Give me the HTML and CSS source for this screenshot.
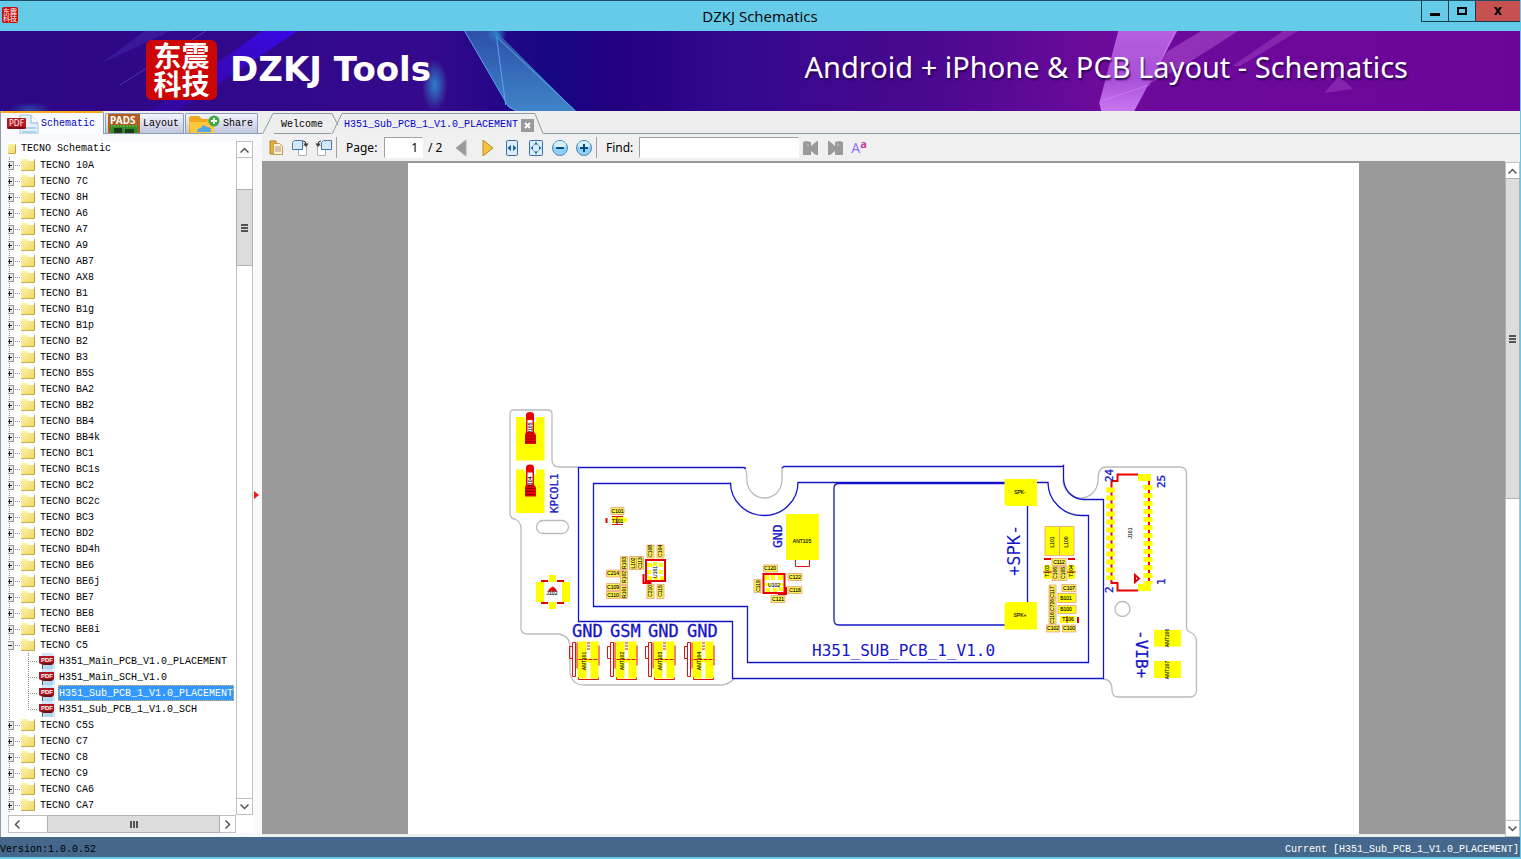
FILE: index.html
```html
<!DOCTYPE html>
<html lang="en">
<head>
<meta charset="utf-8">
<title>DZKJ Schematics</title>
<link rel="stylesheet" href="styles.css">
</head>
<body>
<div class="app">
<header class="titlebar">
  <span class="app-icon" aria-hidden="true">东震科技</span>
  <h1 class="window-title">DZKJ Schematics</h1>
  <div class="window-buttons">
    <button class="win-btn" aria-label="Minimize"><svg width="10" height="10"><path d="M0 7h10v3H0z"/></svg></button>
    <button class="win-btn" aria-label="Maximize"><svg width="10" height="10"><path d="M0 1h10v8H0zM2 3v4h6V3z" fill-rule="evenodd"/></svg></button>
    <button class="win-btn close" aria-label="Close"><svg width="10" height="10"><path d="M1 1h2.500L5 3.500 6.500 1H9L6.300 5 9 9H6.500L5 6.500 3.500 9H1l2.700-4z"/></svg></button>
  </div>
</header>

<section class="banner">
  <svg class="banner-art" viewBox="0 31 1521 80" preserveAspectRatio="none" aria-hidden="true">
    <defs>
      <linearGradient id="bg"><stop offset="0" stop-color="#2c0786"/><stop offset=".28" stop-color="#35098c"/><stop offset=".36" stop-color="#170682"/><stop offset=".41" stop-color="#240080"/><stop offset=".48" stop-color="#33088d"/><stop offset=".6" stop-color="#47088f"/><stop offset=".68" stop-color="#5e0998"/><stop offset=".72" stop-color="#6d0a9c"/><stop offset="1" stop-color="#6b0599"/></linearGradient>
      <linearGradient id="ray" x1="1" y1="0" x2="0" y2="1"><stop offset="0" stop-color="#3808e8"/><stop offset="1" stop-color="#3808b0" stop-opacity=".5"/></linearGradient>
      <linearGradient id="blue" x1="0" y1="0" x2="0" y2="1"><stop offset="0" stop-color="#2d50a8"/><stop offset="1" stop-color="#3f84c8"/></linearGradient>
      <linearGradient id="pink" x1="0" y1="0" x2="0" y2="1"><stop offset="0" stop-color="#b560dc"/><stop offset=".6" stop-color="#a850d8"/><stop offset="1" stop-color="#c878f0"/></linearGradient>
      <radialGradient id="glow"><stop offset="0" stop-color="#3080c8"/><stop offset="1" stop-color="#3080c8" stop-opacity="0"/></radialGradient>
    </defs>
    <path fill="url(#bg)" d="M0 31h1521v80H0z"/>
    <path fill="url(#ray)" d="M150 111 262 31h36L178 111z"/>
    <path d="M120 85 206 31" stroke="#6060e0" opacity=".5"/>
    <path d="M100 64 145 31h26z" fill="#5040c0" opacity=".3"/>
    <ellipse cx="435" cy="85" rx="13" ry="26" fill="url(#glow)"/>
    <ellipse cx="30" cy="110" rx="22" ry="8" fill="url(#glow)" opacity=".5"/>
    <path fill="url(#blue)" d="M465 31h31l80 80h-60l-7-4z"/>
    <path d="M465 31 509 107l8 4M496 31l10 74M497 37l79 74" fill="none" stroke="#5ea4ee"/>
    <ellipse cx="497" cy="34" rx="10" ry="9" fill="url(#glow)"/>
    <path fill="url(#pink)" d="M1119 31h59l-43 80h-33l-2-8z"/>
    <path d="M1102 101l48-16 26-54" fill="none" stroke="#e090ff" opacity=".5"/>
    <path fill="#b050d0" opacity=".55" d="M1202 31h37l-58 37-32 16 18-32z"/>
    <path fill="#b050d0" opacity=".4" d="M1284 31h15l-58 35h-8z"/>
    <path fill="#a040c0" opacity=".5" d="M1340 76l14 13-29 4z"/>
  </svg>
  <span class="logo" lang="zh">东震科技</span>
  <h2 class="brand">DZKJ Tools</h2>
  <p class="slogan">Android + iPhone &amp; PCB Layout - Schematics</p>
</section>

<main class="workspace">
<aside class="sidebar">
  <div class="side-tabs">
    <button class="side-tab active">
      <svg width="32" height="20"><path d="M13 1h11l7 8v11H13z" fill="#e4f1fb" stroke="#aac4dc"/><path d="M24 1v8h7" fill="#fff" stroke="#8fb0d0"/><path d="M15 14h14M15 18h14" stroke="#a8d4ee" stroke-width="2"/><rect y="4" width="19" height="11" rx="1" fill="#b81820"/><path d="M0 13h19l-2 2H2z" fill="#801018"/><text x="2" y="12" class="badge">PDF</text></svg>Schematic</button>
    <button class="side-tab">
      <svg width="32" height="20"><path d="M0 0h32v20H0z" fill="#b35c1c"/><path d="M2 11h28v9H2z" fill="#388a28"/><path d="M6 14h8v6H6zM17 15h9v5h-9z" fill="#173c18"/><path d="M3 12h26" stroke="#8bc34a" stroke-dasharray="2 1"/><text x="2" y="10" class="badge pads">PADS</text></svg>Layout</button>
    <button class="side-tab">
      <svg width="32" height="20"><path d="M1 4q0-2 2-2h8l3 3h10q2 0 2 2v13H1z" fill="#f0a81c"/><path d="M1 8h25v12H3z" fill="#ffc83c"/><path d="M9 18q0-4 4-4 2-5 6-1 5 0 4 5z" fill="#50a8e8"/><circle cx="26" cy="7" r="5.500" fill="#3eac48"/><path d="M26 4v6M23 7h6" stroke="#fff" stroke-width="2"/></svg>Share</button>
  </div>
  <div class="tree-frame">
    <div class="tree-row">
      <nav class="tree-view" aria-label="Schematics">
        <div class="root"><i class="folder cut"></i><a href="#">TECNO Schematic</a></div>
        <ul class="tree">
<li><button class="exp" aria-label="Expand"></button><i class="folder"></i><a href="#">TECNO 10A</a></li>
<li><button class="exp" aria-label="Expand"></button><i class="folder"></i><a href="#">TECNO 7C</a></li>
<li><button class="exp" aria-label="Expand"></button><i class="folder"></i><a href="#">TECNO 8H</a></li>
<li><button class="exp" aria-label="Expand"></button><i class="folder"></i><a href="#">TECNO A6</a></li>
<li><button class="exp" aria-label="Expand"></button><i class="folder"></i><a href="#">TECNO A7</a></li>
<li><button class="exp" aria-label="Expand"></button><i class="folder"></i><a href="#">TECNO A9</a></li>
<li><button class="exp" aria-label="Expand"></button><i class="folder"></i><a href="#">TECNO AB7</a></li>
<li><button class="exp" aria-label="Expand"></button><i class="folder"></i><a href="#">TECNO AX8</a></li>
<li><button class="exp" aria-label="Expand"></button><i class="folder"></i><a href="#">TECNO B1</a></li>
<li><button class="exp" aria-label="Expand"></button><i class="folder"></i><a href="#">TECNO B1g</a></li>
<li><button class="exp" aria-label="Expand"></button><i class="folder"></i><a href="#">TECNO B1p</a></li>
<li><button class="exp" aria-label="Expand"></button><i class="folder"></i><a href="#">TECNO B2</a></li>
<li><button class="exp" aria-label="Expand"></button><i class="folder"></i><a href="#">TECNO B3</a></li>
<li><button class="exp" aria-label="Expand"></button><i class="folder"></i><a href="#">TECNO B5S</a></li>
<li><button class="exp" aria-label="Expand"></button><i class="folder"></i><a href="#">TECNO BA2</a></li>
<li><button class="exp" aria-label="Expand"></button><i class="folder"></i><a href="#">TECNO BB2</a></li>
<li><button class="exp" aria-label="Expand"></button><i class="folder"></i><a href="#">TECNO BB4</a></li>
<li><button class="exp" aria-label="Expand"></button><i class="folder"></i><a href="#">TECNO BB4k</a></li>
<li><button class="exp" aria-label="Expand"></button><i class="folder"></i><a href="#">TECNO BC1</a></li>
<li><button class="exp" aria-label="Expand"></button><i class="folder"></i><a href="#">TECNO BC1s</a></li>
<li><button class="exp" aria-label="Expand"></button><i class="folder"></i><a href="#">TECNO BC2</a></li>
<li><button class="exp" aria-label="Expand"></button><i class="folder"></i><a href="#">TECNO BC2c</a></li>
<li><button class="exp" aria-label="Expand"></button><i class="folder"></i><a href="#">TECNO BC3</a></li>
<li><button class="exp" aria-label="Expand"></button><i class="folder"></i><a href="#">TECNO BD2</a></li>
<li><button class="exp" aria-label="Expand"></button><i class="folder"></i><a href="#">TECNO BD4h</a></li>
<li><button class="exp" aria-label="Expand"></button><i class="folder"></i><a href="#">TECNO BE6</a></li>
<li><button class="exp" aria-label="Expand"></button><i class="folder"></i><a href="#">TECNO BE6j</a></li>
<li><button class="exp" aria-label="Expand"></button><i class="folder"></i><a href="#">TECNO BE7</a></li>
<li><button class="exp" aria-label="Expand"></button><i class="folder"></i><a href="#">TECNO BE8</a></li>
<li><button class="exp" aria-label="Expand"></button><i class="folder"></i><a href="#">TECNO BE8i</a></li>
<li><button class="exp open" aria-label="Collapse"></button><i class="folder"></i><a href="#">TECNO C5</a>
  <ul class="files">
    <li><svg class="pdf" width="16" height="16"><use href="#pdf"/></svg><a href="#">H351_Main_PCB_V1.0_PLACEMENT</a></li>
    <li><svg class="pdf" width="16" height="16"><use href="#pdf"/></svg><a href="#">H351_Main_SCH_V1.0</a></li>
    <li><svg class="pdf" width="16" height="16"><use href="#pdf"/></svg><a href="#" class="selected">H351_Sub_PCB_1_V1.0_PLACEMENT</a></li>
    <li><svg class="pdf" width="16" height="16"><use href="#pdf"/></svg><a href="#">H351_Sub_PCB_1_V1.0_SCH</a></li>
  </ul></li>
<li><button class="exp" aria-label="Expand"></button><i class="folder"></i><a href="#">TECNO C5S</a></li>
<li><button class="exp" aria-label="Expand"></button><i class="folder"></i><a href="#">TECNO C7</a></li>
<li><button class="exp" aria-label="Expand"></button><i class="folder"></i><a href="#">TECNO C8</a></li>
<li><button class="exp" aria-label="Expand"></button><i class="folder"></i><a href="#">TECNO C9</a></li>
<li><button class="exp" aria-label="Expand"></button><i class="folder"></i><a href="#">TECNO CA6</a></li>
<li><button class="exp" aria-label="Expand"></button><i class="folder"></i><a href="#">TECNO CA7</a></li>
        </ul>
      </nav>
      <div class="vscroll">
        <button class="sb" aria-label="Scroll up"><svg width="9" height="6"><path d="M.5 5.500l4-4 4 4"/></svg></button>
        <div class="thumb"><i class="grip"></i></div>
        <button class="sb end" aria-label="Scroll down"><svg width="9" height="6"><path d="M.5.500l4 4 4-4"/></svg></button>
      </div>
    </div>
    <div class="hscroll">
      <button class="sb" aria-label="Scroll left"><svg width="6" height="9"><path d="M5.500.500l-4 4 4 4"/></svg></button>
      <div class="thumb"><i class="grip"></i></div>
      <button class="sb" aria-label="Scroll right"><svg width="6" height="9"><path d="M.5.500l4 4-4 4"/></svg></button>
    </div>
  </div>
  <svg class="splitter-arrow" width="5" height="8"><path d="M0 0l5 4-5 4z" fill="#e02010"/></svg>
</aside>

<section class="document">
  <div class="doc-tabs">
    <svg width="12" height="21"><path d="M.5 21 11 .5h1"/></svg><button class="doc-tab">Welcome</button><svg class="cross" width="12" height="21"><path d="M0 .5h1L7 12M1 21 11 .5h1"/></svg><div class="doc-tab active"><button class="doc-name">H351_Sub_PCB_1_V1.0_PLACEMENT</button><button class="doc-close" aria-label="Close tab"><svg width="7" height="7"><path d="M1 1l5 5M6 1 1 6"/></svg></button></div><svg width="10" height="21"><path d="M0 .5h1L9 20.500h1"/></svg><div class="tab-rest"></div>
  </div>
  <div class="toolbar">
    <button class="tool" aria-label="Bookmarks"><svg width="16" height="16"><path d="M2 1h6v13H2z" fill="#e8b040" stroke="#b07c20"/><path d="M5.500 3.500h6l3 3v8h-9z" fill="#fff4c8" stroke="#c09a50"/><path d="M7 7h6M7 9h6M7 11h6" stroke="#b88"/></svg></button>
    <button class="tool" aria-label="Rotate right"><svg width="18" height="18"><path d="M7.500 6.500h8v10h-8z" fill="#fff" stroke="#b0b0b0"/><path d="M3.500 1.500h8v9h-10v-7z" fill="#d4e8fa" stroke="#4878a8"/><path d="M12 2q3 0 3 3" fill="none" stroke="#333"/><path d="M12.500 4.500h5L15 8z" fill="#333"/></svg></button>
    <button class="tool" aria-label="Rotate left"><svg width="18" height="18"><path d="M2.500 6.500h8v10h-8z" fill="#fff" stroke="#b0b0b0"/><path d="M8.500 1.500h8v9h-10v-7z" fill="#d4e8fa" stroke="#4878a8"/><path d="M6 2Q3 2 3 5" fill="none" stroke="#333"/><path d="M.5 4.500h5L3 8z" fill="#333"/></svg></button>
    <span class="sep"></span>
    <label class="page-label" for="page">Page:</label><input id="page" class="page-input" value="1"><span class="page-total">/ 2</span>
    <button class="tool" aria-label="Previous page"><svg width="12" height="18"><path d="M11 1v16L1 9z" fill="#999" stroke="#aaa"/></svg></button>
    <button class="tool next" aria-label="Next page"><svg width="12" height="18"><path d="M1 1v16L11 9z" fill="#f2c340" stroke="#c08820"/></svg></button>
    <button class="tool" aria-label="Fit width"><svg width="12" height="16"><rect x=".5" y=".5" width="11" height="15" rx="1" fill="#d8ecfc" stroke="#3c6ea0"/><path d="M5 5v6L1.500 8zM7 5v6l3.500-3z" fill="#15609c"/></svg></button>
    <button class="tool" aria-label="Fit page"><svg width="14" height="16"><rect x=".5" y=".5" width="13" height="15" rx="1" fill="#d8ecfc" stroke="#3c6ea0"/><path d="M7 2l2 2.500H5zM7 14l2-2.500H5zM1.500 8 4 6v4zM12.500 8 10 6v4z" fill="#15609c"/><path d="M4 6l2-2M8 4l2 2M4 10l2 2M8 12l2-2" stroke="#6890b0" stroke-dasharray="1 1"/></svg></button>
    <button class="tool" aria-label="Zoom out"><svg width="16" height="16"><circle cx="8" cy="8" r="7.500" fill="#8fd0f4" stroke="#4888b8"/><ellipse cx="8" cy="5" rx="6" ry="4" fill="#d4effc"/><path d="M4 7h8v2H4z" fill="#0c4c80"/></svg></button>
    <button class="tool" aria-label="Zoom in"><svg width="16" height="16"><circle cx="8" cy="8" r="7.500" fill="#8fd0f4" stroke="#4888b8"/><ellipse cx="8" cy="5" rx="6" ry="4" fill="#d4effc"/><path d="M7 4h2v3h3v2H9v3H7V9H4V7h3z" fill="#0c4c80"/></svg></button>
    <span class="sep"></span>
    <label class="find-label" for="find">Find:</label><input id="find" class="find-input" type="text">
    <button class="tool" aria-label="Find previous"><svg width="16" height="16"><path d="M0 2l3-1 5 1v4l6-5h1v14h-2L8 11v4H0z" fill="#999"/><path d="M4 5h2" stroke="#ccc"/></svg></button>
    <button class="tool" aria-label="Find next"><svg width="16" height="16"><path d="M16 2l-3-1-5 1v4L2 1H1v14h2l5-4v4h8z" fill="#999"/><path d="M10 5h2" stroke="#ccc"/></svg></button>
    <button class="tool match" aria-label="Match case"><span class="big-a">A</span><span class="small-a">a</span></button>
  </div>
  <div class="viewer">
    <div class="canvas">
      <div class="sheet">
<svg class="board" viewBox="408 163 951 671" preserveAspectRatio="xMidYMin meet" role="img" aria-label="H351_SUB_PCB_1_V1.0 placement">
  <defs>
    <symbol id="pdf" viewBox="0 0 16 16"><path d="M3 0h10l3 3v13H3z" fill="#cfe8f8"/><path d="M5 13h9M5 15h9" stroke="#90c4e8"/><path d="M3.500 12v4" stroke="#456"/><rect y="3" width="15" height="7" fill="#b01420"/><path d="M0 10h15l-2 2H4z" fill="#701018"/><text x="2" y="9" class="pdf-text">PDF</text></symbol>
    <g id="ant"><path class="y" d="M8 0h21v37H8z"/><path fill="#fff" d="M17 0h4v37h-4z"/><path class="y" d="M8 17h21v4H8z"/><path class="r" d="M3 1h3v34H3zM0 5h3v12H0zM7.500 1v26M29.500 4v20M9 36v2h20v-2"/><path class="r" d="M9 18h20" stroke-dasharray="4 1"/><path class="r wide" d="M19 1v8"/></g>
    <g id="clip"><path class="y" d="M516 417h28.500v43.500H516z"/><path fill="#fff" d="M525 416h11v6h-11z"/><path fill="#e80000" d="M526 415q0-3 4-3t4 3v17l2 3v9h-11v-9l1-3z"/><path fill="#fff" d="M527.500 420h5v12h-5z"/><path d="M526 436h9M525 439h10M525 442h10" stroke="#600" stroke-width=".7"/></g>
  </defs>
  <g class="edge">
    <path d="M578 467H560Q552 467 552 460V414Q552 410 548 410H514Q510 410 510 414V514Q511 519 515 519Q521 522 521 528V628Q521 634 528 634H559Q570 636 570 647V673Q572 685 584 685H720Q728 685 734 679"/>
    <path d="M744 468Q747 470 747 480A17.500 18 0 0 0 782 480V467"/>
    <path d="M1063 480A17.500 18 0 0 0 1098 480Q1098 467 1106 467H1180Q1186 467 1186.500 473V625Q1186 631 1190 632Q1196 635 1196.500 641V690Q1196 697 1190 697H1118Q1112 697 1112 690Q1112 679 1103 679"/>
    <rect x="536.500" y="520.500" width="32" height="13" rx="6.500"/><circle cx="1122.500" cy="609" r="7.500"/>
  </g>
  <g class="silk">
    <path d="M746 468.500Q745 467.500 743 467.500H578.500V621.500H732.500V678.500H1103.500V499.500H1084A20.500 21.500 0 0 1 1063.500 478V465.500L1062 466.500H784L782 468"/>
    <path d="M730.500 483.500H593.500V606.500H747.500V662.500H1088.500V515.500H1082A34 33 0 0 1 1048 482.500H798A33.750 33 0 0 1 730.500 482.500"/>
    <path d="M1005 483.500H839Q834 483.500 834 488V620Q834 625 839 625H1005M1027.500 505V603"/>
  </g>
  <path class="y" d="M1004.500 479H1037v27h-29q-3.500 0-3.500-3.500zM1008 602h29v27.500h-32.500V605.500q0-3.500 3.500-3.500zM786 514h33v46h-33zM1154 630h27v16.500h-27zM1154 661h27v17h-27z"/>
  <use href="#clip"/><use href="#clip" y="52.500"/>
  <use href="#ant" x="569.500" y="641.500"/><use href="#ant" x="607.500" y="641.500"/><use href="#ant" x="645.500" y="641.500"/><use href="#ant" x="684.500" y="641.500"/>
  <path class="r" d="M795.500 560v6.500h14V560"/>
  <path class="y" d="M536 582h8v20h-8zM562 582h8v20h-8zM549 575h7v7h-7zM549 602h7v7h-7z"/>
  <path class="rr" d="M541 581h7M557 581h7M541 603h7M557 603h7"/><path fill="#e00" d="M548 591.500q1-3 4.500-5 4 2 4.500 5z"/>
  <path class="y" d="M647 563h5v4h-5zM653 562h4v4h-4zM659 563h4v4h-4zM647 570h4v4h-4zM659 570h4v4h-4zM648 576h4v4h-4zM654 577h4v3h-4zM660 576h4v4h-4zM765 575h4v5h-4zM771 575h4v5h-4zM778 575h5v5h-5zM765 583h5v3h-5zM779 583h4v3h-4zM766 588h4v4h-4zM773 588h4v4h-4zM779 587h4v4h-4z"/>
  <path class="rr" d="M646 560h19v21h-19zM643.500 574v9h8M763.500 574h21v19h-21z"/><path fill="#e80000" d="M785 587h2v8h-9v-2h7z"/>
  <g class="part">
    <path d="M611 507.500h13v7h-13zM606.500 570h13v7h-13zM606.500 583.500h13v7h-13zM606.500 591.500h13v7h-13zM620.500 556.500h7v13h-7zM620.500 570.500h7v14h-7zM620.500 585.500h7v13h-7zM629.500 556.500h7v13h-7zM636.500 556.500h7v13h-7zM647 545h7v13h-7zM657 545h7v13h-7zM647 584.500h7v14h-7zM657 584.500h7v14h-7z"/>
    <path d="M763.500 565h14v7h-14zM788 573.500h14v7h-14zM788 586.500h14v7h-14zM771 595.500h14v7h-14zM754 579.500h7v13h-7z"/>
    <path d="M1052 558.500h14v7h-14zM1052 566.500h7v14h-7zM1060 566.500h7v14h-7zM1062 584.500h14v7h-14zM1049 585h7v13h-7zM1049 598h7v13h-7zM1049 611h7v13h-7zM1046.500 625h13v7h-13zM1062.500 625h13v7h-13z"/>
    <path class="solid" d="M1058 593.500h18v9h-18zM1058 605.500h18v8h-18z"/>
    <path class="solid" d="M1045 526.500h14.500v29H1045zM1059.500 526.500H1074v29h-14.500z"/>
  </g>
  <path class="y" d="M612 517h11l4 1.500v3l-4 1.500h-11zM1044 565h7v14h-7zM1068 565h7v14h-7zM1060 616h15v7h-15z"/>
  <path class="rr" d="M606.500 518v5M1044 559h7M1068 559h7M1078 617v6"/>
  <path class="r" d="M612 516.500h11M612 524.500h11M617 517v7M1043 572h9M1067 572h9M1067 616v7"/>
  <g class="conn">
    <path class="rr" d="M1138 474.500H1117.500V481H1111.500V583H1117.500V590.500H1138M1149 481V584"/>
    <path class="y" d="M1138 474h13v7h-13zM1138 584h13v7h-13z"/>
    <path class="pads-line" d="M1110.500 487.500V580M1148 485V584"/>
    <path class="rr" d="M1135 575l4 3.500-4 3.500z"/>
  </g>
  <g class="silk-text">
    <text x="572" y="637" font-size="17">GND</text><text x="610" y="637" font-size="17">GSM</text><text x="648" y="637" font-size="17">GND</text><text x="687" y="637" font-size="17">GND</text>
    <text class="thin" x="812" y="656" font-size="16">H351_SUB_PCB_1_V1.0</text>
    <text transform="translate(558 513)rotate(-90)" font-size="11">KPCOL1</text>
    <text transform="translate(782 548)rotate(-90)" font-size="13">GND</text>
    <text class="thin" transform="translate(1020 576)rotate(-90)" font-size="17">+SPK-</text>
    <text transform="translate(1136 630)rotate(90)" font-size="16">-VIB+</text>
    <text transform="translate(1113 482)rotate(-90)" font-size="11">24</text>
    <text transform="translate(1165 488)rotate(-90)" font-size="11">25</text>
    <text transform="translate(1113 593)rotate(-90)" font-size="11">2</text>
    <text transform="translate(1165 585)rotate(-90)" font-size="11">1</text>
  </g>
  <g class="ref">
    <text x="617.500" y="513">C101</text><text x="617.500" y="523">T101</text><text x="613" y="575">C214</text><text x="613" y="589">C109</text><text x="613" y="597">C110</text>
    <text x="770" y="570">C120</text><text x="795" y="579">C122</text><text x="795" y="592">C118</text><text x="778" y="601">C121</text><text x="774" y="587">U102</text><text x="802" y="543">ANT105</text>
    <text x="1020" y="494">SPK-</text><text x="1020" y="617">SPK+</text><text x="552" y="595">J102</text>
    <text x="1059" y="564">C112</text><text x="1069" y="590">C107</text><text x="1066" y="600">B101</text><text x="1066" y="611">B100</text><text x="1068" y="621">T106</text><text x="1053" y="630">C102</text><text x="1069" y="630">C100</text>
    <text transform="translate(626 563)rotate(-90)">R103</text><text transform="translate(626 577)rotate(-90)">R102</text><text transform="translate(626 592)rotate(-90)">R101</text><text transform="translate(635 563)rotate(-90)">L102</text><text transform="translate(642 563)rotate(-90)">C113</text>
    <text transform="translate(652 551)rotate(-90)">C108</text><text transform="translate(662 551)rotate(-90)">C104</text><text transform="translate(652 591)rotate(-90)">C210</text><text transform="translate(662 591)rotate(-90)">C115</text><text transform="translate(657 572)rotate(-90)">U101</text>
    <text transform="translate(760 586)rotate(-90)">C119</text><text transform="translate(1054 542)rotate(-90)">L101</text><text transform="translate(1068 542)rotate(-90)">L100</text>
    <text transform="translate(1049 571)rotate(-90)">T103</text><text transform="translate(1073 571)rotate(-90)">T104</text><text transform="translate(1057 573)rotate(-90)">C106</text><text transform="translate(1065 573)rotate(-90)">C105</text>
    <text transform="translate(1054 592)rotate(-90)">C117</text><text transform="translate(1054 605)rotate(-90)">C726</text><text transform="translate(1054 618)rotate(-90)">C116</text><text transform="translate(1132 533)rotate(-90)">J101</text>
    <text transform="translate(586 661)rotate(-90)">ANT101</text><text transform="translate(624 661)rotate(-90)">ANT102</text><text transform="translate(662 661)rotate(-90)">ANT103</text><text transform="translate(701 661)rotate(-90)">ANT104</text>
    <text transform="translate(1169 638)rotate(-90)">ANT106</text><text transform="translate(1169 670)rotate(-90)">ANT107</text><text transform="translate(532 428)rotate(-90)">J105</text><text transform="translate(532 482)rotate(-90)">J104</text>
  </g>
</svg>
      </div>
    </div>
    <div class="vscroll page-scroll">
      <button class="sb" aria-label="Scroll up"><svg width="9" height="6"><path d="M.5 5.500l4-4 4 4"/></svg></button>
      <div class="thumb"><i class="grip"></i></div>
      <button class="sb end" aria-label="Scroll down"><svg width="9" height="6"><path d="M.5.500l4 4 4-4"/></svg></button>
    </div>
  </div>
</section>
</main>

<footer class="status"><span>Version:1.0.0.52</span><span class="current">Current [H351_Sub_PCB_1_V1.0_PLACEMENT]</span></footer>
</div>
</body>
</html>
```
FILE: styles.css
```css
* { box-sizing: border-box; }
body { margin: 0; background: #66cae9; color: #000; font: 10px/16px "Liberation Mono", monospace; }
button { margin: 0; padding: 0; border: 0; background: none; color: inherit; font: inherit; }
a { color: inherit; text-decoration: none; }
svg { display: block; flex: none; }

.app { display: flex; flex-direction: column; height: 100vh; overflow: hidden; border-right: 1px solid #66cae9; border-bottom: 2px solid #66cae9; }

.titlebar { position: relative; display: flex; flex: none; align-items: center; justify-content: center; height: 31px; border-top: 1px solid #1d4f68; background: #66cae9; }
.app-icon { position: absolute; left: 2px; top: 6px; width: 16px; height: 16px; padding: 1px 0; border-radius: 2px; background: #c80808; color: #fff; font: 7px/7px "Noto Sans CJK SC", sans-serif; text-align: center; }
.window-title { margin: 0; font: 15px/20px "Open Sans", "Noto Sans", sans-serif; }
.window-buttons { position: absolute; top: 0; right: -1px; display: flex; height: 21px; border: 1px solid #153c4c; border-top: 0; }
.win-btn { display: grid; place-items: center; width: 27px; border-right: 1px solid #153c4c; }
.win-btn.close { width: 44px; border: 0; background: #c75050; }

.banner { position: relative; display: flex; flex: none; align-items: center; height: 80px; padding: 0 112px 0 146px; background: #2c0786; color: #fff; }
.banner-art { position: absolute; inset: 0; width: 100%; height: 100%; }
.logo { position: relative; width: 71px; height: 60px; margin-bottom: 2px; padding: 1px 7px 0; border-radius: 6px; background: #cc0505; font: bold 28px/28px "Noto Sans CJK SC", sans-serif; text-align: center; }
.brand { position: relative; margin: 0 0 4px 13px; font: bold 34px/40px "DejaVu Sans", sans-serif; white-space: nowrap; }
.slogan { position: relative; margin: 0 0 8px auto; font: 29px/36px "Noto Sans", sans-serif; text-shadow: 1px 2px 2px #2a0050; white-space: nowrap; }

.workspace { display: flex; flex: 1; min-height: 0; background: #eee; }
.sidebar { position: relative; display: flex; flex: none; flex-direction: column; width: 262px; border-left: 1px solid #8c9cac; background: #f8f9fc; }
.side-tabs { display: flex; flex: none; align-items: flex-end; height: 23px; border-bottom: 1px solid #8c9cbc; background: #eee; }
.side-tab { display: flex; gap: 3px; align-items: center; height: 20px; padding: 0 4px 0 2px; margin-left: 1px; border: 1px solid #8c9cbc; border-bottom: 0; border-radius: 2px 2px 0 0; background: linear-gradient(#f4f6fc, #c0c6dc); overflow: hidden; }
.side-tab.active { height: 23px; margin: 0 0 -1px; padding: 0 8px 0 6px; gap: 2px; border: 0; border-top: 2px solid #f8a820; border-right: 1px solid #8c9cbc; background: #fbfcff; color: #0000c0; }
.badge { font: 8px "Noto Sans", sans-serif; fill: #fff; }
.badge.pads { font: bold 10px "Noto Sans", sans-serif; }
.tree-frame { display: flex; flex: 1; flex-direction: column; min-height: 0; margin: 7px 8px 4px 7px; background: #fff; }
.tree-row { display: flex; flex: 1; min-height: 0; }
.tree-view { flex: 1; overflow: hidden; background: #fff; }
.root { display: flex; align-items: center; height: 16px; gap: 5px; }
.root a, .tree a { line-height: 18px; }
.tree, .files { margin: 0; padding: 0; list-style: none; }
.tree > li { display: grid; grid-template-columns: 13px 14px 1fr; align-items: center; background: repeating-linear-gradient(#888 0 1px, transparent 1px 2px) 1px 0 / 1px 100% no-repeat; }
.tree a { justify-self: start; height: 16px; margin-left: 5px; white-space: nowrap; }
.exp { width: 13px; height: 16px; background:
  linear-gradient(#222, #222) 0 8px / 4px 1px no-repeat,
  linear-gradient(#222, #222) 1px 6px / 1px 5px no-repeat,
  linear-gradient(#999, #999) 0 4px / 6px 1px no-repeat,
  linear-gradient(#999, #999) 0 12px / 6px 1px no-repeat,
  linear-gradient(#999, #999) 5px 4px / 1px 9px no-repeat,
  linear-gradient(#e8e8e8, #e8e8e8) 0 4px / 6px 9px no-repeat,
  repeating-linear-gradient(90deg, #888 0 1px, transparent 1px 2px) 7px 8px / 6px 1px no-repeat; }
.exp.open { background:
  linear-gradient(#222, #222) 0 8px / 4px 1px no-repeat,
  linear-gradient(#999, #999) 0 4px / 6px 1px no-repeat,
  linear-gradient(#999, #999) 0 12px / 6px 1px no-repeat,
  linear-gradient(#999, #999) 5px 4px / 1px 9px no-repeat,
  linear-gradient(#e8e8e8, #e8e8e8) 0 4px / 6px 9px no-repeat,
  repeating-linear-gradient(90deg, #888 0 1px, transparent 1px 2px) 7px 8px / 6px 1px no-repeat; }
.folder { width: 14px; height: 12px; border-radius: 1px; border-right: 1px solid #c0a040; border-bottom: 1px solid #c8a848; background: linear-gradient(#fff, #fff) 6px 0 / 8px 2px no-repeat, linear-gradient(135deg, #fff4a8, #f0d868); }
.folder.cut { width: 8px; height: 10px; }
.files { grid-column: 1 / -1; margin-left: 20px; background: repeating-linear-gradient(#888 0 1px, transparent 1px 2px) 0 0 / 1px 57px no-repeat; }
.files li { display: flex; align-items: center; height: 16px; background: repeating-linear-gradient(90deg, #888 0 1px, transparent 1px 2px) 0 8px / 10px 1px no-repeat; }
.pdf { margin-left: 11px; }
.pdf-text { font: bold 6px "Liberation Sans", sans-serif; fill: #fff; }
.files a { margin-left: 3px; padding: 0 1px; }
.files .selected { outline: 1px dotted #f0b050; outline-offset: -1px; background: #3399ff; color: #fff; }

.vscroll { display: flex; flex: none; flex-direction: column; width: 17px; border: 1px solid #c0c0c0; background: #fff; }
.tree-row .vscroll { margin-right: 1px; }
.sb { display: grid; flex: none; place-items: center; width: 15px; height: 16px; border-bottom: 1px solid #c0c0c0; background: #fff; }
.sb.end { margin-top: auto; border-top: 1px solid #c0c0c0; border-bottom: 0; }
.sb path { fill: none; stroke: #555; stroke-width: 1.5; }
.thumb { display: grid; place-items: center; border: 1px solid #b0b0b0; background: #dcdcdc; }
.vscroll .thumb { flex: none; height: 77px; margin: 31px -1px 0; }
.grip { width: 7px; height: 8px; background: repeating-linear-gradient(#555 0 2px, transparent 2px 3px); }
.hscroll { display: flex; flex: none; height: 18px; margin-right: 18px; border: 1px solid #c0c0c0; background: #fff; }
.hscroll .sb { height: 16px; border-bottom: 0; }
.hscroll .sb + .thumb { flex: 1; margin: -1px 0 -1px 23px; }
.hscroll .grip { width: 8px; height: 7px; background: repeating-linear-gradient(90deg, #555 0 2px, transparent 2px 3px); }
.splitter-arrow { position: absolute; right: 3px; top: 380px; }

.document { display: flex; flex: 1; flex-direction: column; min-width: 0; }
.doc-tabs { display: flex; flex: none; align-items: flex-end; height: 23px; background: #eee; }
.doc-tabs > svg > path { fill: none; stroke: #8c9ca4; }
.doc-tab { height: 21px; padding: 3px 8px 0 7px; border-top: 1px solid #8c9ca4; border-bottom: 1px solid #8c9ca4; line-height: 16px; }
.doc-tab.active { display: flex; gap: 3px; align-items: center; padding: 2px 0 0 1px; border-bottom: 0; color: #0000d0; }
.doc-close { display: grid; place-items: center; width: 13px; height: 13px; background: #999; }
.doc-close path { stroke: #fff; stroke-width: 2; }
.tab-rest { flex: 1; height: 21px; border-bottom: 1px solid #8c9ca4; }
.toolbar { display: flex; flex: none; align-items: center; height: 27px; padding-left: 2px; background: #f0f0f0; font: 12px/16px "Noto Sans", sans-serif; }
.tool { display: flex; flex: none; align-items: center; justify-content: center; width: 24px; height: 24px; }
.tool.next { margin-left: 3px; }
.sep { width: 1px; height: 21px; margin-right: 9px; background: #a0a0a0; }
.page-label { width: 38px; }
.page-input, .find-input { height: 21px; padding: 0 4px; border: 1px solid #fff; border-top-color: #a0a0a0; border-left-color: #a0a0a0; background: #fff; font: inherit; }
.page-input { width: 39px; text-align: right; }
.page-total { width: 26px; padding-left: 5px; }
.find-label { width: 33px; }
.find-input { width: 160px; }
.match { color: #9070f0; }
.big-a { font-size: 14px; }
.small-a { align-self: flex-start; color: #c040a0; font-size: 11px; line-height: 16px; font-weight: bold; }

.viewer { display: flex; flex: 1; min-height: 0; }
.canvas { flex: 1; min-width: 0; padding: 2px 146px 0; margin-bottom: 3px; background: #999; }
.sheet { height: 100%; background: #fff; overflow: hidden; }
.board { width: 100%; }
.page-scroll { width: 15px; margin-top: 1px; }
.page-scroll .sb { width: 13px; }
.page-scroll .thumb { height: 321px; margin-top: -1px; }

.edge { fill: none; stroke: #bbb; stroke-width: 1.3; }
.silk { fill: none; stroke: #1414c8; stroke-width: 1.3; }
.y { fill: #ff0; }
.r { fill: none; stroke: #e01010; stroke-width: 1; }
.r.wide { stroke-width: 3; stroke-dasharray: 1 2; }
.rr { fill: none; stroke: #e80000; stroke-width: 2; }
.part { fill: #fff450; stroke: #e8a080; stroke-width: .8; }
.part .solid { fill: #ff0; }
.pads-line { fill: none; stroke: #ff0; stroke-width: 9; stroke-dasharray: 5 3; }
.silk-text { fill: #1414c8; stroke: #1414c8; stroke-width: .3; font-family: "DejaVu Sans Mono", monospace; }
.silk-text .thin { stroke: none; }
.ref { fill: #000; stroke: #000; stroke-width: .1; font: 5px "Liberation Sans", sans-serif; text-anchor: middle; }

.status { display: flex; flex: none; justify-content: space-between; height: 20px; padding: 5px 1px 0 0; background: #45678c; color: #000; }
.status .current { color: #fff; }
```
